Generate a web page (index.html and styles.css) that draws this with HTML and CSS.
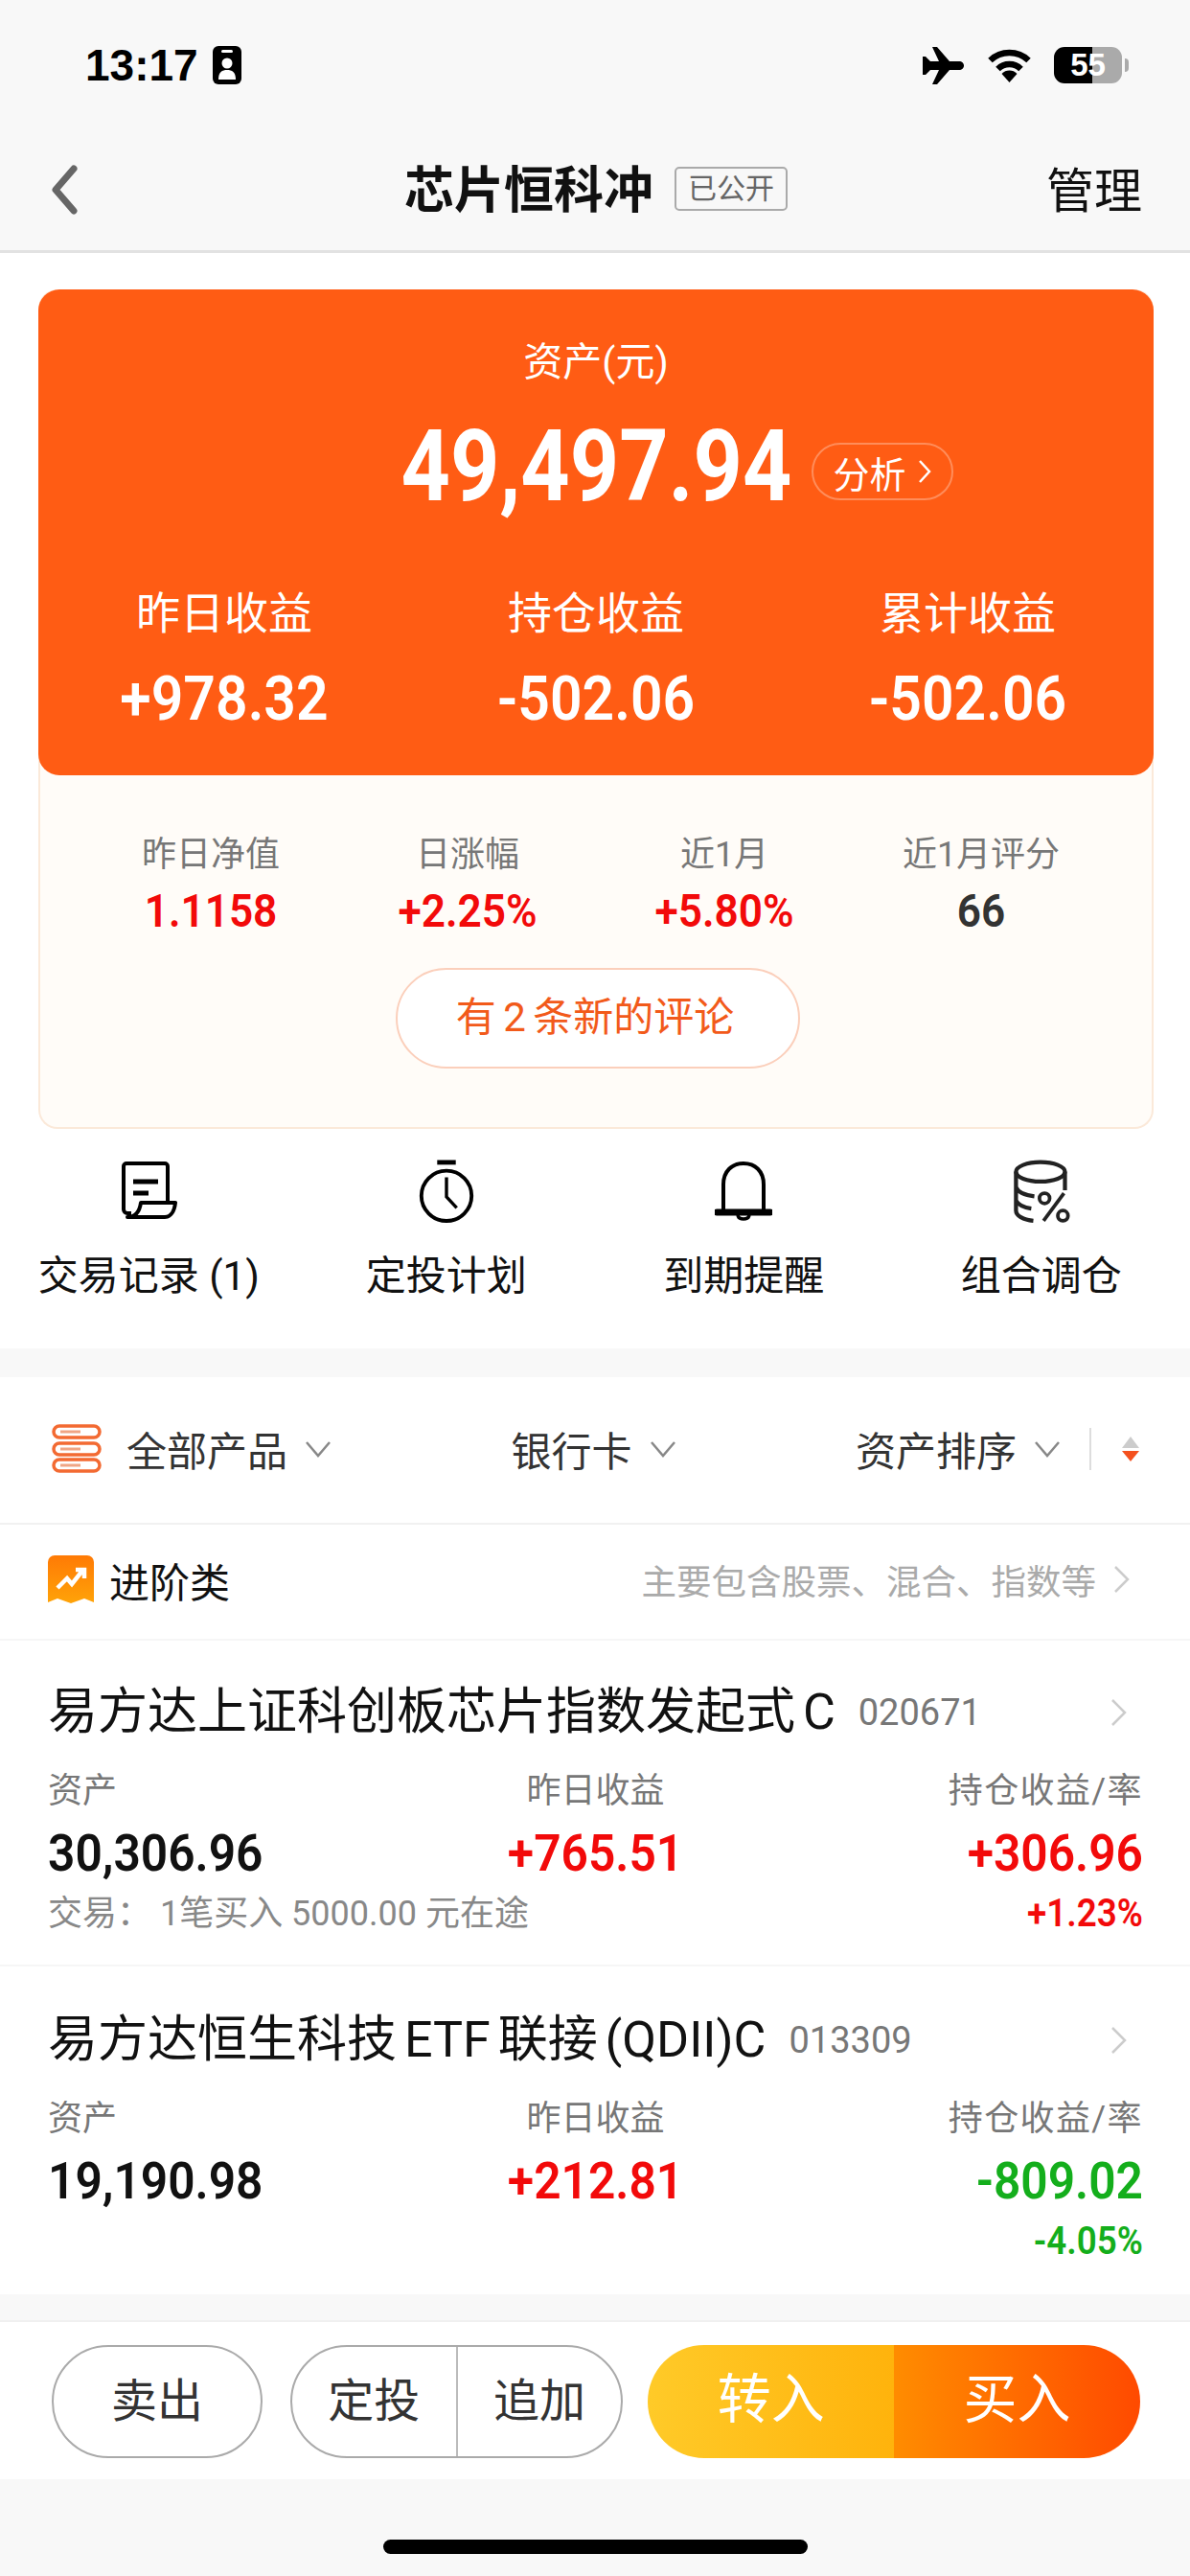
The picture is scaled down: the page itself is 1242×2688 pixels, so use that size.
FILE: index.html
```html
<!DOCTYPE html>
<html lang="zh-CN">

<head>
    <meta charset="UTF-8">
    <meta name="viewport" content="width=device-width, initial-scale=1.0">
    <title>芯片恒科冲</title>
    <link rel="stylesheet" href="styles.css">
</head>

<body>
    <header class="top">
        <div class="status">
            <div class="status-left">
                <span class="time">13:17</span>
                <svg class="id-icon" viewBox="0 0 30 40">
                    <rect width="30" height="40" rx="6" fill="#000" />
                    <rect x="9" y="4" width="12" height="3" rx="1.5" fill="#fff" />
                    <circle cx="15" cy="18" r="5.5" fill="#fff" />
                    <path d="M6 35c0-8 4-10 9-10s9 2 9 10z" fill="#fff" />
                </svg>
            </div>
            <div class="status-right">
                <svg class="plane" viewBox="0 0 44 39">
                    <path d="M43 19.5C43 17 41 15 38 15H28L15 0H10L17 15H8L3 10H0V29H3L8 24H17L10 39H15L28 24H38C41 24 43 22 43 19.5Z" fill="#000" />
                </svg>
                <svg class="wifi" viewBox="0 0 47 36">
                    <path d="M3.5 13A29 29 0 0 1 43.500 13" fill="none" stroke="#000" stroke-width="6.500" />
                    <path d="M11.500 22A17 17 0 0 1 35.500 22" fill="none" stroke="#000" stroke-width="6.500" />
                    <path d="M15.500 27A11 11 0 0 1 31.500 27L23.500 36Z" fill="#000" />
                </svg>
                <div class="battery"><span>55</span></div>
                <i class="battery-nub"></i>
            </div>
        </div>
        <nav class="nav">
            <svg class="back" viewBox="0 0 30 52">
                <path d="M25 4L6 26L25 48" fill="none" stroke="#666" stroke-width="7" stroke-linecap="round" stroke-linejoin="round" />
            </svg>
            <div class="nav-title">
                <h1>芯片恒科冲</h1>
                <span class="public-tag">已公开</span>
            </div>
            <a class="manage">管理</a>
        </nav>
    </header>

    <section class="card">
        <div class="hero">
            <div class="hero-label">资产(元)</div>
            <div class="hero-total">
                <span class="num total">49,497.94</span>
                <span class="analyse">分析
                    <svg viewBox="0 0 16 28">
                        <path d="M3 3L13 14L3 25" fill="none" stroke="#fff" stroke-width="2.500" />
                    </svg>
                </span>
            </div>
            <div class="hero-stats">
                <div>
                    <p>昨日收益</p>
                    <b class="num">+978.32</b>
                </div>
                <div>
                    <p>持仓收益</p>
                    <b class="num">-502.06</b>
                </div>
                <div>
                    <p>累计收益</p>
                    <b class="num">-502.06</b>
                </div>
            </div>
        </div>
        <div class="fund-info">
            <div class="fund-stats">
                <div>
                    <p>昨日净值</p>
                    <b class="num red">1.1158</b>
                </div>
                <div>
                    <p>日涨幅</p>
                    <b class="num red">+2.25%</b>
                </div>
                <div>
                    <p>近1月</p>
                    <b class="num red">+5.80%</b>
                </div>
                <div>
                    <p>近1月评分</p>
                    <b class="num dark">66</b>
                </div>
            </div>
            <a class="comments">有 2 条新的评论</a>
        </div>
    </section>

    <section class="actions">
        <div class="action">
            <svg viewBox="0 0 60 62">
                <path d="M12 54H8a4 4 0 0 1-4-4V5a3 3 0 0 1 3-3h40a3 3 0 0 1 3 3v37" fill="none" stroke="#000" stroke-width="4" />
                <path d="M8 58H47C53 58 57 52 58 43H22C21 50 18 58 8 58Z" fill="none" stroke="#000" stroke-width="4" stroke-linejoin="round" />
                <path d="M14 21H40M14 33H30" stroke="#000" stroke-width="5" />
            </svg>
            <span>交易记录 (1)</span>
        </div>
        <div class="action">
            <svg viewBox="0 0 60 68">
                <path d="M20 3H40" stroke="#000" stroke-width="5" />
                <circle cx="30" cy="39" r="27" fill="none" stroke="#000" stroke-width="4" />
                <path d="M30 19V40L41 52" fill="none" stroke="#000" stroke-width="3.500" />
            </svg>
            <span>定投计划</span>
        </div>
        <div class="action">
            <svg viewBox="0 0 60 62">
                <path d="M9 52V24C9 10 18 2 30 2S51 10 51 24V52" fill="none" stroke="#000" stroke-width="4" />
                <path d="M2 53H58" stroke="#000" stroke-width="7" stroke-linecap="round" />
                <path d="M24 55C24 59 27 60 30 60S36 59 36 55" fill="none" stroke="#000" stroke-width="3.500" />
            </svg>
            <span>到期提醒</span>
        </div>
        <div class="action">
            <svg viewBox="0 0 56 62">
                <ellipse cx="27" cy="12" rx="24" ry="9.500" fill="none" stroke="#222" stroke-width="4" />
                <path d="M3 12V50C3 55 10 59 20 60M51 12V30M3 27C5 32 12 35 21 36M3 40C5 44 11 47 18 48" fill="none" stroke="#222" stroke-width="4" />
                <circle cx="31" cy="38" r="5" fill="none" stroke="#222" stroke-width="3.500" />
                <circle cx="49" cy="55" r="5" fill="none" stroke="#222" stroke-width="3.500" />
                <path d="M50 33L30 60" stroke="#222" stroke-width="3.500" />
            </svg>
            <span>组合调仓</span>
        </div>
    </section>

    <div class="band"></div>

    <section class="filters">
        <div class="filter">
            <svg class="filter-icon" viewBox="0 0 52 51">
                <g fill="#fff" stroke="#f36a32" stroke-width="3.500">
                    <rect x="2" y="2" width="48" height="12" rx="6" />
                    <rect x="2" y="20" width="48" height="12" rx="6" />
                    <rect x="2" y="37" width="48" height="12" rx="6" />
                </g>
                <path d="M9 8H30M9 26H30M9 43H30" stroke="#f0a585" stroke-width="3" />
            </svg>
            <span>全部产品</span>
            <svg class="chev-down" viewBox="0 0 28 18">
                <path d="M2 2L14 16L26 2" fill="none" stroke="#888" stroke-width="2.500" />
            </svg>
        </div>
        <div class="filter">
            <span>银行卡</span>
            <svg class="chev-down" viewBox="0 0 28 18">
                <path d="M2 2L14 16L26 2" fill="none" stroke="#888" stroke-width="2.500" />
            </svg>
        </div>
        <div class="filter">
            <span>资产排序</span>
            <svg class="chev-down" viewBox="0 0 28 18">
                <path d="M2 2L14 16L26 2" fill="none" stroke="#888" stroke-width="2.500" />
            </svg>
            <i class="filter-divider"></i>
            <svg class="sort" viewBox="0 0 18 26">
                <path d="M9 0L18 12H0Z" fill="#ccc" />
                <path d="M0 15H18L9 26Z" fill="#f4511e" />
            </svg>
        </div>
    </section>

    <section class="group-head">
        <div class="group-name">
            <svg class="group-icon" viewBox="0 0 48 50">
                <defs>
                    <linearGradient id="badge" x1="0" y1="0" x2="0" y2="1">
                        <stop offset="0" stop-color="#ff7a05" />
                        <stop offset="1" stop-color="#ffa308" />
                    </linearGradient>
                </defs>
                <path d="M7 0H41a7 7 0 0 1 7 7V49L38 45L24 50L10 45L0 49V7A7 7 0 0 1 7 0Z" fill="url(#badge)" />
                <path d="M10 34L20 24L25 30L36 16M29 15H38V24" fill="none" stroke="#fff" stroke-width="4.500" />
            </svg>
            <span>进阶类</span>
        </div>
        <div class="group-note">
            <span>主要包含股票、混合、指数等</span>
            <svg class="chev-right" viewBox="0 0 18 30">
                <path d="M2 2L15 15L2 28" fill="none" stroke="#ccc" stroke-width="2.500" />
            </svg>
        </div>
    </section>

    <section class="fund first">
        <div class="fund-title">
            <h2>易方达上证科创板芯片指数发起式 C</h2>
            <span class="code">020671</span>
            <svg class="chev-right" viewBox="0 0 18 30">
                <path d="M2 2L15 15L2 28" fill="none" stroke="#ccc" stroke-width="2.500" />
            </svg>
        </div>
        <div class="fund-cols">
            <div class="col-left">
                <p>资产</p>
                <b class="num">30,306.96</b>
                <em>交易： 1笔买入 5000.00 元在途</em>
            </div>
            <div class="col-mid">
                <p>昨日收益</p>
                <b class="num red">+765.51</b>
            </div>
            <div class="col-right">
                <p>持仓收益/率</p>
                <b class="num red">+306.96</b>
                <em class="num red">+1.23%</em>
            </div>
        </div>
    </section>

    <section class="fund">
        <div class="fund-title">
            <h2>易方达恒生科技 ETF 联接 (QDII)C</h2>
            <span class="code">013309</span>
            <svg class="chev-right" viewBox="0 0 18 30">
                <path d="M2 2L15 15L2 28" fill="none" stroke="#ccc" stroke-width="2.500" />
            </svg>
        </div>
        <div class="fund-cols">
            <div class="col-left">
                <p>资产</p>
                <b class="num">19,190.98</b>
            </div>
            <div class="col-mid">
                <p>昨日收益</p>
                <b class="num red">+212.81</b>
            </div>
            <div class="col-right">
                <p>持仓收益/率</p>
                <b class="num green">-809.02</b>
                <em class="num green">-4.05%</em>
            </div>
        </div>
    </section>

    <div class="band band-bottom"></div>

    <section class="trade-bar">
        <a class="btn sell">卖出</a>
        <div class="btn-pair">
            <a>定投</a>
            <a>追加</a>
        </div>
        <div class="btn-main">
            <a class="move-in">转入</a>
            <a class="buy">买入</a>
        </div>
    </section>

    <footer class="home-area">
        <i class="home-indicator"></i>
    </footer>
</body>

</html>
```

FILE: styles.css
```css
* {
    box-sizing: border-box;
}

body {
    width: 1242px;
    height: 2688px;
    margin: 0;
    overflow: hidden;
    background-color: #fff;
    color: #333;
    font-family: Roboto, "Noto Sans CJK SC", sans-serif;
}

h1,
h2,
p {
    margin: 0;
    font-weight: 400;
}

em {
    font-style: normal;
}

/* the app's digits are a narrow DIN style cut, none installed so squeeze Roboto */
.num {
    font-family: Roboto, sans-serif;
    font-weight: 600;
    transform: scaleX(0.92);
}

.red {
    color: #f20a0a;
}

.green {
    color: #14ae1c;
}

.dark {
    color: #333;
}

/* top */
.top {
    height: 264px;
    background-color: #f8f8f8;
    border-bottom: 3px solid #e2e2e2;
}

.status {
    height: 136px;
    padding: 0 64px 0 89px;
    display: flex;
    justify-content: space-between;
    align-items: center;
}

.status-left,
.status-right {
    display: flex;
    align-items: center;
}

.time {
    font-family: "Liberation Sans", sans-serif;
    font-size: 46px;
    font-weight: 700;
    color: #000;
}

.id-icon {
    width: 30px;
    height: 40px;
    margin-left: 15px;
}

.plane {
    width: 44px;
    height: 39px;
}

.wifi {
    width: 47px;
    height: 36px;
    margin-left: 23px;
}

.battery {
    width: 71px;
    height: 38px;
    margin-left: 23px;
    border-radius: 11px;
    background: linear-gradient(to right, #000 56%, #aaa 56%);
    color: #fff;
    font-family: "Liberation Sans", sans-serif;
    font-size: 33px;
    font-weight: 700;
    line-height: 38px;
    text-align: center;
}

.battery-nub {
    width: 4px;
    height: 14px;
    margin-left: 3px;
    border-radius: 0 4px 4px 0;
    background-color: #aaa;
}

.nav {
    height: 125px;
    padding: 0 50px 8px 52px;
    display: grid;
    grid-template-columns: 1fr auto 1fr;
    align-items: center;
}

.back {
    width: 30px;
    height: 52px;
    margin-top: 6px;
}

.nav-title {
    display: flex;
    align-items: center;
}

.nav-title h1 {
    font-size: 52px;
    font-weight: 700;
    color: #111;
}

.public-tag {
    margin: 5px 0 0 22px;
    padding: 0 12px;
    height: 46px;
    border: 2px solid #aaa;
    border-radius: 5px;
    color: #666;
    font-size: 30px;
    line-height: 42px;
}

.manage {
    justify-self: end;
    font-size: 50px;
    color: #111;
}

/* asset card */
.card {
    margin: 38px 38px 0 40px;
    border: 2px solid #fbe9d9;
    border-top: 0;
    border-radius: 20px;
    background-color: #fffcf8;
}

.hero {
    height: 507px;
    margin: 0 -2px;
    border-radius: 22px;
    background-color: #ff5c14;
    color: #fff;
    text-align: center;
}

.hero-label {
    padding-top: 50px;
    font-size: 41px;
    line-height: 52px;
}

.hero-total {
    margin-top: 23px;
    display: grid;
    grid-template-columns: 1fr auto 1fr;
    align-items: center;
}

.total {
    grid-column: 2;
    margin: 0 -30px;
    font-size: 103px;
    font-weight: 700;
    line-height: 120px;
    transform: scaleX(0.87);
}

.analyse {
    justify-self: start;
    margin: 10px 0 0 21px;
    width: 148px;
    height: 60px;
    display: flex;
    align-items: center;
    justify-content: center;
    gap: 12px;
    border: 2px solid rgba(255, 255, 255, 0.3);
    border-radius: 30px;
    font-size: 38px;
}

.analyse svg {
    width: 16px;
    height: 28px;
}

.hero-stats {
    margin-top: 63px;
    display: grid;
    grid-template-columns: repeat(3, 1fr);
}

.hero-stats p {
    font-size: 46px;
    line-height: 60px;
}

.hero-stats b {
    display: block;
    margin-top: 22px;
    font-size: 64px;
    line-height: 76px;
}

.fund-info {
    height: 367px;
    padding: 61px 0 0 44px;
}

.fund-stats {
    display: grid;
    grid-template-columns: repeat(4, 268px);
    text-align: center;
}

.fund-stats p {
    color: #777;
    font-size: 36px;
    line-height: 44px;
}

.fund-stats b {
    display: block;
    margin-top: 13px;
    font-size: 48px;
    line-height: 48px;
}

.comments {
    display: block;
    width: 422px;
    height: 105px;
    margin: 35px 0 0 327px;
    padding-right: 6px;
    border: 2px solid #fbcfbb;
    border-radius: 53px;
    background-color: #fff;
    color: #f25a1a;
    font-size: 42px;
    line-height: 100px;
    text-align: center;
    word-spacing: -3px;
}

/* shortcuts */
.actions {
    height: 229px;
    padding-top: 32px;
    display: grid;
    grid-template-columns: repeat(4, 1fr);
    text-align: center;
}

.action svg {
    display: block;
    width: 60px;
    height: 66px;
    margin: 0 auto;
}

.action span {
    display: block;
    margin-top: 26px;
    color: #111;
    font-size: 42px;
    line-height: 60px;
}

.band {
    height: 30px;
    background-color: #f8f8f8;
}

/* filters */
.filters {
    height: 154px;
    padding: 0 53px 3px 54px;
    display: flex;
    justify-content: space-between;
    align-items: center;
    border-bottom: 2px solid #f1f1f1;
    font-size: 42px;
}

.filter {
    display: flex;
    align-items: center;
}

.filter-icon {
    width: 52px;
    height: 51px;
    margin-right: 26px;
}

.chev-down {
    width: 28px;
    height: 18px;
    margin-left: 18px;
}

.filter-divider {
    width: 2px;
    height: 44px;
    margin-left: 30px;
    background-color: #ddd;
}

.sort {
    width: 18px;
    height: 26px;
    margin-left: 32px;
}

.group-head {
    height: 121px;
    padding: 0 62px 5px 50px;
    display: flex;
    justify-content: space-between;
    align-items: center;
    border-bottom: 2px solid #f6f6f6;
}

.group-name {
    display: flex;
    align-items: center;
    color: #111;
    font-size: 42px;
}

.group-icon {
    width: 48px;
    height: 50px;
    margin-right: 16px;
}

.group-note {
    display: flex;
    align-items: center;
    color: #aaa;
    font-size: 36.500px;
}

.chev-right {
    width: 18px;
    height: 30px;
    margin-left: 18px;
}

/* fund rows */
.fund {
    height: 342px;
    padding: 47px 49px 0 50px;
}

.fund.first {
    height: 340px;
    padding-top: 45px;
    border-bottom: 2px solid #f6f6f6;
}

.fund-title {
    display: flex;
    align-items: center;
    height: 60px;
    padding-right: 16px;
}

.fund-title h2 {
    color: #111;
    font-size: 52px;
    line-height: 60px;
    white-space: nowrap;
    word-spacing: -5px;
}

.code {
    margin-left: 24px;
    color: #777;
    font-size: 38px;
}

.fund-title .chev-right {
    margin-left: auto;
}

.fund-cols {
    margin-top: 30px;
    display: grid;
    grid-template-columns: repeat(3, minmax(0, 1fr));
}

.col-mid {
    text-align: center;
}

.col-right {
    text-align: right;
}

.col-right p {
    letter-spacing: 1.400px;
}

.col-left .num {
    transform-origin: left;
}

.col-right .num {
    transform-origin: right;
}

.fund-cols p {
    color: #777;
    font-size: 36px;
    line-height: 44px;
}

.fund-cols b {
    display: block;
    margin-top: 10px;
    color: #111;
    font-size: 54px;
    line-height: 66px;
}

.fund-cols .red {
    color: #f20a0a;
}

.fund-cols .green {
    color: #14ae1c;
}

.fund-cols em {
    display: block;
    margin-top: 5px;
    color: #888;
    font-size: 36px;
    line-height: 50px;
    white-space: nowrap;
}

.fund-cols em.num {
    font-size: 40px;
}

.fund-cols em.red {
    color: #f20a0a;
}

.fund-cols em.green {
    color: #14ae1c;
}

.band-bottom {
    height: 29px;
    border-bottom: 2px solid #f0f0f0;
}

/* bottom buttons */
.trade-bar {
    height: 164px;
    padding: 24px 52px 0 54px;
    display: flex;
    align-items: flex-start;
    font-size: 48px;
    line-height: 114px;
    text-align: center;
}

.sell {
    width: 220px;
    height: 118px;
    border: 2px solid #aaa;
    border-radius: 59px;
}

.btn-pair {
    width: 348px;
    height: 118px;
    margin-left: 29px;
    display: flex;
    border: 2px solid #aaa;
    border-radius: 59px;
}

.btn-pair a {
    flex: 1;
}

.btn-pair a + a {
    border-left: 2px solid #bbb;
}

.btn-main {
    width: 514px;
    height: 118px;
    margin-left: 26px;
    display: flex;
    border-radius: 59px;
    overflow: hidden;
    color: #fff;
    font-size: 56px;
}

.move-in {
    width: 257px;
    background: linear-gradient(to right, #ffca28, #ffb30c);
}

.buy {
    width: 257px;
    background: linear-gradient(to right, #ff8c00, #ff4a00);
}

.home-area {
    height: 103px;
    padding-top: 63px;
    background-color: #f8f8f8;
    display: flex;
    justify-content: center;
    align-items: flex-start;
}

.home-indicator {
    width: 443px;
    height: 15px;
    border-radius: 8px;
    background-color: #000;
}
```
